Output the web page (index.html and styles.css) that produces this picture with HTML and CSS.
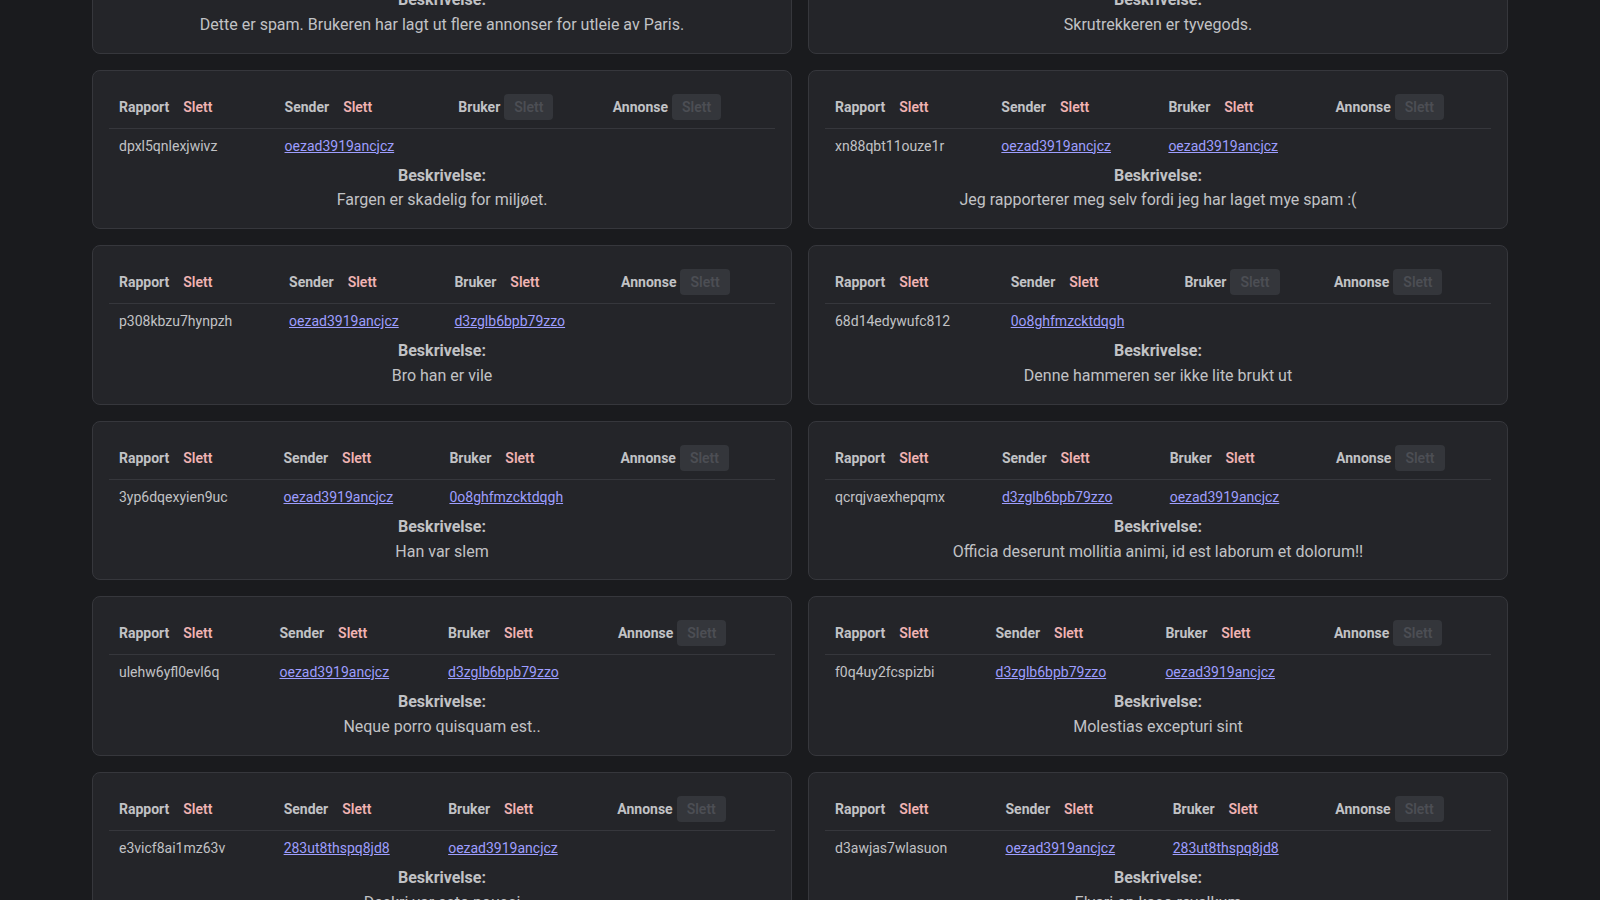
FILE: index.html
```html
<!DOCTYPE html>
<html lang="no">
<head>
  <meta charset="UTF-8" />
  <meta name="viewport" content="width=device-width, initial-scale=1.0"/>
  <title>Rapporter</title>
  <link rel="stylesheet" href="styles.css">
</head>
<body>
  <div class="page">
    <div class="reports">

      <div class="card">
        <table class="report">
          <thead><tr>
            <th><div class="head">Rapport <button class="del">Slett</button></div></th>
            <th><div class="head">Sender <button class="del">Slett</button></div></th>
            <th><div class="head">Bruker <button class="del">Slett</button></div></th>
            <th><div class="head">Annonse <button class="del">Slett</button></div></th>
          </tr></thead>
          <tbody><tr>
            <td>k2m9xq4ztw1pla7</td>
            <td><a href="#">0o8ghfmzcktdqgh</a></td>
            <td><a href="#">oezad3919ancjcz</a></td>
            <td><a href="#">vq7b2nd8ex1hk0s</a></td>
          </tr></tbody>
        </table>
        <p class="label">Beskrivelse:</p>
        <p class="desc">Dette er spam. Brukeren har lagt ut flere annonser for utleie av Paris.</p>
      </div>

      <div class="card">
        <table class="report">
          <thead><tr>
            <th><div class="head">Rapport <button class="del">Slett</button></div></th>
            <th><div class="head">Sender <button class="del">Slett</button></div></th>
            <th><div class="head">Bruker <button class="del">Slett</button></div></th>
            <th><div class="head">Annonse <button class="del">Slett</button></div></th>
          </tr></thead>
          <tbody><tr>
            <td>r5tz0wq8mn3yc2e</td>
            <td><a href="#">d3zglb6bpb79zzo</a></td>
            <td><a href="#">283ut8thspq8jd8</a></td>
            <td><a href="#">h6pw1ks9aj4rt2u</a></td>
          </tr></tbody>
        </table>
        <p class="label">Beskrivelse:</p>
        <p class="desc">Skrutrekkeren er tyvegods.</p>
      </div>

      <div class="card">
        <table class="report">
          <thead><tr>
            <th><div class="head">Rapport <button class="del">Slett</button></div></th>
            <th><div class="head">Sender <button class="del">Slett</button></div></th>
            <th><div class="head">Bruker <button class="del" disabled>Slett</button></div></th>
            <th><div class="head">Annonse <button class="del" disabled>Slett</button></div></th>
          </tr></thead>
          <tbody><tr>
            <td>dpxl5qnlexjwivz</td>
            <td><a href="#">oezad3919ancjcz</a></td>
            <td></td>
            <td></td>
          </tr></tbody>
        </table>
        <p class="label">Beskrivelse:</p>
        <p class="desc">Fargen er skadelig for miljøet.</p>
      </div>

      <div class="card">
        <table class="report">
          <thead><tr>
            <th><div class="head">Rapport <button class="del">Slett</button></div></th>
            <th><div class="head">Sender <button class="del">Slett</button></div></th>
            <th><div class="head">Bruker <button class="del">Slett</button></div></th>
            <th><div class="head">Annonse <button class="del" disabled>Slett</button></div></th>
          </tr></thead>
          <tbody><tr>
            <td>xn88qbt11ouze1r</td>
            <td><a href="#">oezad3919ancjcz</a></td>
            <td><a href="#">oezad3919ancjcz</a></td>
            <td></td>
          </tr></tbody>
        </table>
        <p class="label">Beskrivelse:</p>
        <p class="desc">Jeg rapporterer meg selv fordi jeg har laget mye spam :(</p>
      </div>

      <div class="card">
        <table class="report">
          <thead><tr>
            <th><div class="head">Rapport <button class="del">Slett</button></div></th>
            <th><div class="head">Sender <button class="del">Slett</button></div></th>
            <th><div class="head">Bruker <button class="del">Slett</button></div></th>
            <th><div class="head">Annonse <button class="del" disabled>Slett</button></div></th>
          </tr></thead>
          <tbody><tr>
            <td>p308kbzu7hynpzh</td>
            <td><a href="#">oezad3919ancjcz</a></td>
            <td><a href="#">d3zglb6bpb79zzo</a></td>
            <td></td>
          </tr></tbody>
        </table>
        <p class="label">Beskrivelse:</p>
        <p class="desc">Bro han er vile</p>
      </div>

      <div class="card">
        <table class="report">
          <thead><tr>
            <th><div class="head">Rapport <button class="del">Slett</button></div></th>
            <th><div class="head">Sender <button class="del">Slett</button></div></th>
            <th><div class="head">Bruker <button class="del" disabled>Slett</button></div></th>
            <th><div class="head">Annonse <button class="del" disabled>Slett</button></div></th>
          </tr></thead>
          <tbody><tr>
            <td>68d14edywufc812</td>
            <td><a href="#">0o8ghfmzcktdqgh</a></td>
            <td></td>
            <td></td>
          </tr></tbody>
        </table>
        <p class="label">Beskrivelse:</p>
        <p class="desc">Denne hammeren ser ikke lite brukt ut</p>
      </div>

      <div class="card">
        <table class="report">
          <thead><tr>
            <th><div class="head">Rapport <button class="del">Slett</button></div></th>
            <th><div class="head">Sender <button class="del">Slett</button></div></th>
            <th><div class="head">Bruker <button class="del">Slett</button></div></th>
            <th><div class="head">Annonse <button class="del" disabled>Slett</button></div></th>
          </tr></thead>
          <tbody><tr>
            <td>3yp6dqexyien9uc</td>
            <td><a href="#">oezad3919ancjcz</a></td>
            <td><a href="#">0o8ghfmzcktdqgh</a></td>
            <td></td>
          </tr></tbody>
        </table>
        <p class="label">Beskrivelse:</p>
        <p class="desc">Han var slem</p>
      </div>

      <div class="card">
        <table class="report">
          <thead><tr>
            <th><div class="head">Rapport <button class="del">Slett</button></div></th>
            <th><div class="head">Sender <button class="del">Slett</button></div></th>
            <th><div class="head">Bruker <button class="del">Slett</button></div></th>
            <th><div class="head">Annonse <button class="del" disabled>Slett</button></div></th>
          </tr></thead>
          <tbody><tr>
            <td>qcrqjvaexhepqmx</td>
            <td><a href="#">d3zglb6bpb79zzo</a></td>
            <td><a href="#">oezad3919ancjcz</a></td>
            <td></td>
          </tr></tbody>
        </table>
        <p class="label">Beskrivelse:</p>
        <p class="desc">Officia deserunt mollitia animi, id est laborum et dolorum!!</p>
      </div>

      <div class="card">
        <table class="report">
          <thead><tr>
            <th><div class="head">Rapport <button class="del">Slett</button></div></th>
            <th><div class="head">Sender <button class="del">Slett</button></div></th>
            <th><div class="head">Bruker <button class="del">Slett</button></div></th>
            <th><div class="head">Annonse <button class="del" disabled>Slett</button></div></th>
          </tr></thead>
          <tbody><tr>
            <td>ulehw6yfl0evl6q</td>
            <td><a href="#">oezad3919ancjcz</a></td>
            <td><a href="#">d3zglb6bpb79zzo</a></td>
            <td></td>
          </tr></tbody>
        </table>
        <p class="label">Beskrivelse:</p>
        <p class="desc">Neque porro quisquam est..</p>
      </div>

      <div class="card">
        <table class="report">
          <thead><tr>
            <th><div class="head">Rapport <button class="del">Slett</button></div></th>
            <th><div class="head">Sender <button class="del">Slett</button></div></th>
            <th><div class="head">Bruker <button class="del">Slett</button></div></th>
            <th><div class="head">Annonse <button class="del" disabled>Slett</button></div></th>
          </tr></thead>
          <tbody><tr>
            <td>f0q4uy2fcspizbi</td>
            <td><a href="#">d3zglb6bpb79zzo</a></td>
            <td><a href="#">oezad3919ancjcz</a></td>
            <td></td>
          </tr></tbody>
        </table>
        <p class="label">Beskrivelse:</p>
        <p class="desc">Molestias excepturi sint</p>
      </div>

      <div class="card">
        <table class="report">
          <thead><tr>
            <th><div class="head">Rapport <button class="del">Slett</button></div></th>
            <th><div class="head">Sender <button class="del">Slett</button></div></th>
            <th><div class="head">Bruker <button class="del">Slett</button></div></th>
            <th><div class="head">Annonse <button class="del" disabled>Slett</button></div></th>
          </tr></thead>
          <tbody><tr>
            <td>e3vicf8ai1mz63v</td>
            <td><a href="#">283ut8thspq8jd8</a></td>
            <td><a href="#">oezad3919ancjcz</a></td>
            <td></td>
          </tr></tbody>
        </table>
        <p class="label">Beskrivelse:</p>
        <p class="desc">Deskri var esto nousci</p>
      </div>

      <div class="card">
        <table class="report">
          <thead><tr>
            <th><div class="head">Rapport <button class="del">Slett</button></div></th>
            <th><div class="head">Sender <button class="del">Slett</button></div></th>
            <th><div class="head">Bruker <button class="del">Slett</button></div></th>
            <th><div class="head">Annonse <button class="del" disabled>Slett</button></div></th>
          </tr></thead>
          <tbody><tr>
            <td>d3awjas7wlasuon</td>
            <td><a href="#">oezad3919ancjcz</a></td>
            <td><a href="#">283ut8thspq8jd8</a></td>
            <td></td>
          </tr></tbody>
        </table>
        <p class="label">Beskrivelse:</p>
        <p class="desc">Elvari en kaso revalkum</p>
      </div>

    </div>
  </div>
</body>
</html>
```

FILE: styles.css
```css
body {
  margin: 0;
  background: #1a1b1e;
  color: #c1c2c5;
  font-family: -apple-system, BlinkMacSystemFont, "Segoe UI", Roboto, "Liberation Sans", sans-serif;
  color-scheme: dark;
}

.page {
  max-width: 1416px;
  margin: 0 auto;
}

/* list is scrolled down a bit, first row is half off screen */
.reports {
  display: grid;
  grid-template-columns: 1fr 1fr;
  gap: 16px;
  margin-top: -106px;
  padding-bottom: 16px;
}

.card {
  background: #242529;
  border: 1px solid #36373c;
  border-radius: 8px;
  padding: 16px 16px 15px;
}

.report {
  width: 100%;
  border-collapse: collapse;
  font-size: 14px;
}

.report th {
  padding: 7px 10px 8px;
  text-align: left;
  font-weight: 700;
  border-bottom: 1px solid #36373c;
}

.report td {
  padding: 7px 10px;
  line-height: 21px;
}

.head {
  display: flex;
  align-items: center;
  gap: 4px;
}

.del {
  height: 26px;
  padding: 0 10px;
  border: none;
  border-radius: 4px;
  background: transparent;
  color: #f0b3b3;
  font-family: inherit;
  font-size: 14px;
  font-weight: 600;
  cursor: pointer;
}

.del:disabled {
  background: #34363b;
  color: #4c4e54;
  cursor: not-allowed;
}

a {
  color: #9e9eff;
}

.label {
  margin: 0;
  text-align: center;
  font-size: 16px;
  font-weight: 700;
  line-height: 1.55;
}

.desc {
  margin: 0;
  text-align: center;
  font-size: 16px;
  line-height: 1.55;
}
```
